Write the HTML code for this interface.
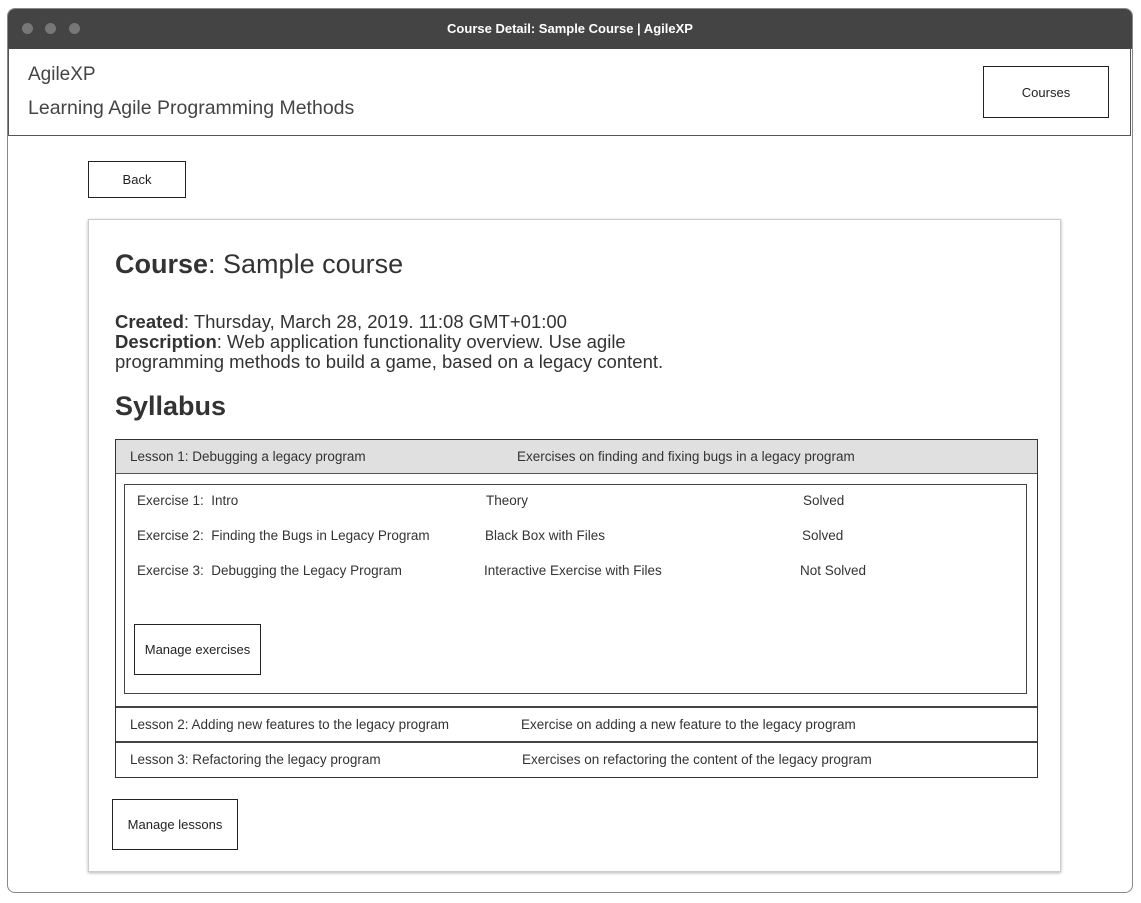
<!DOCTYPE html>
<html><head><meta charset="utf-8"><style>
*{margin:0;padding:0;box-sizing:border-box}
body{width:1141px;height:903px;background:#fff;font-family:"Liberation Sans",sans-serif;color:#333;position:relative;overflow:hidden}
.a{position:absolute;white-space:nowrap}
.win{position:absolute;left:7px;top:8px;width:1126px;height:885px;border:1.5px solid #888;border-radius:8px;overflow:hidden}
.bar{position:absolute;left:0;top:0;width:100%;height:40px;background:#444;color:#fff;font-size:13px;font-weight:bold;text-align:center;line-height:40px}
.dot{position:absolute;top:14px;width:11px;height:11px;border-radius:50%;background:#777}
.btn{position:absolute;border:1px solid #222;background:#fff;font-size:13px;color:#222;display:flex;align-items:center;justify-content:center}
.s{font-size:13.5px;color:#333}
</style></head><body>
<div class="win">
<div class="bar">Course Detail: Sample Course | AgileXP
<div class="dot" style="left:14px"></div><div class="dot" style="left:37px"></div><div class="dot" style="left:61px"></div></div>
</div>
<div class="a" style="left:8px;top:48px;width:1123px;height:88px;border-bottom:1.5px solid #555;border-left:1px solid #555;border-right:1px solid #555"></div>
<div class="a" style="left:28px;top:64px;font-size:19px;color:#444">AgileXP</div>
<div class="a" style="left:28px;top:97px;font-size:19.5px;color:#444">Learning Agile Programming Methods</div>
<div class="btn" style="left:983px;top:66px;width:126px;height:52px">Courses</div>
<div class="btn" style="left:88px;top:161px;width:98px;height:37px">Back</div>
<div class="a" style="left:88px;top:219px;width:973px;height:653px;border:1px solid #ccc;box-shadow:0 1px 3px rgba(0,0,0,.3)"></div>
<div class="a" style="left:115px;top:249px;font-size:27px"><b>Course</b>: Sample course</div>
<div class="a" style="left:115px;top:312px;font-size:18.5px;line-height:20px">
<b>Created</b>: Thursday, March 28, 2019. 11:08 GMT+01:00<br><b>Description</b>: Web application functionality overview. Use agile<br>programming methods to build a game, based on a legacy content.</div>
<div class="a" style="left:115px;top:391px;font-size:27px;font-weight:bold">Syllabus</div>
<div class="a" style="left:115px;top:439px;width:923px;height:339px;border:1px solid #333"></div>
<div class="a" style="left:116px;top:440px;width:921px;height:34px;background:#e0e0e0;border-bottom:1px solid #555"></div>
<div class="a s" style="left:130px;top:449px">Lesson 1: Debugging a legacy program</div>
<div class="a s" style="left:517px;top:449px">Exercises on finding and fixing bugs in a legacy program</div>
<div class="a" style="left:124px;top:484px;width:903px;height:210px;border:1.5px solid #444"></div>
<div class="a s" style="left:137px;top:493px">Exercise 1:&nbsp; Intro</div>
<div class="a s" style="left:486px;top:493px">Theory</div>
<div class="a s" style="left:803px;top:493px">Solved</div>
<div class="a s" style="left:137px;top:528px">Exercise 2:&nbsp; Finding the Bugs in Legacy Program</div>
<div class="a s" style="left:485px;top:528px">Black Box with Files</div>
<div class="a s" style="left:802px;top:528px">Solved</div>
<div class="a s" style="left:137px;top:563px">Exercise 3:&nbsp; Debugging the Legacy Program</div>
<div class="a s" style="left:484px;top:563px">Interactive Exercise with Files</div>
<div class="a s" style="left:800px;top:563px">Not Solved</div>
<div class="btn" style="left:134px;top:624px;width:127px;height:51px">Manage exercises</div>
<div class="a" style="left:116px;top:706px;width:921px;height:2px;background:#444"></div>
<div class="a s" style="left:130px;top:717px">Lesson 2: Adding new features to the legacy program</div>
<div class="a s" style="left:521px;top:717px">Exercise on adding a new feature to the legacy program</div>
<div class="a" style="left:116px;top:741px;width:921px;height:2px;background:#444"></div>
<div class="a s" style="left:130px;top:752px">Lesson 3: Refactoring the legacy program</div>
<div class="a s" style="left:522px;top:752px">Exercises on refactoring the content of the legacy program</div>
<div class="btn" style="left:112px;top:799px;width:126px;height:51px">Manage lessons</div>
</body></html>
